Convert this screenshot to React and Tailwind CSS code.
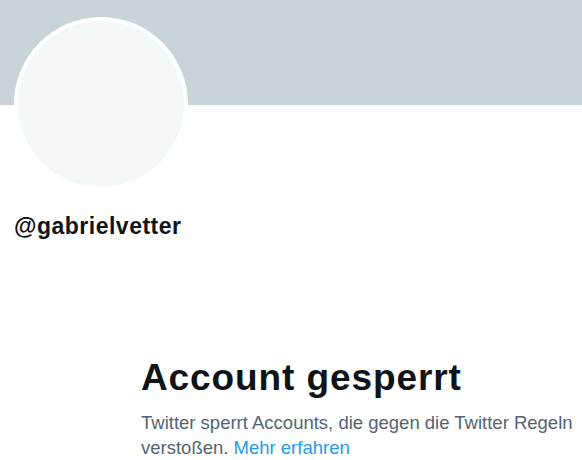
export default function App() {
  return (
    <div className="min-h-[460px] w-full overflow-hidden bg-white font-['Liberation_Sans',Arial,sans-serif]">
      <div className="h-[105px] bg-[#c9d4d9]" />
      <div className="-mt-[88px] ml-[14px] h-[174px] w-[174px] rounded-full bg-white p-[4px]">
        <div className="h-full w-full rounded-full bg-[#f5f8f8]" />
      </div>
      <p className="ml-[14px] mt-[21px] text-[23px] font-bold leading-[28px] tracking-[0.5px] text-[#0f1419]">
        @gabrielvetter
      </p>
      <div className="ml-[141px] mt-[116px] max-w-[440px]">
        <h1 className="text-[37px] font-bold leading-[44px] tracking-[0.9px] text-[#0f1419]">
          Account gesperrt
        </h1>
        <p className="mt-[10px] text-[18.5px] leading-[25px] text-[#536471]">
          Twitter sperrt Accounts, die gegen die Twitter Regeln verstoßen.{" "}
          <a href="#" className="text-[#1d9bf0]">Mehr erfahren</a>
        </p>
      </div>
    </div>
  );
}
